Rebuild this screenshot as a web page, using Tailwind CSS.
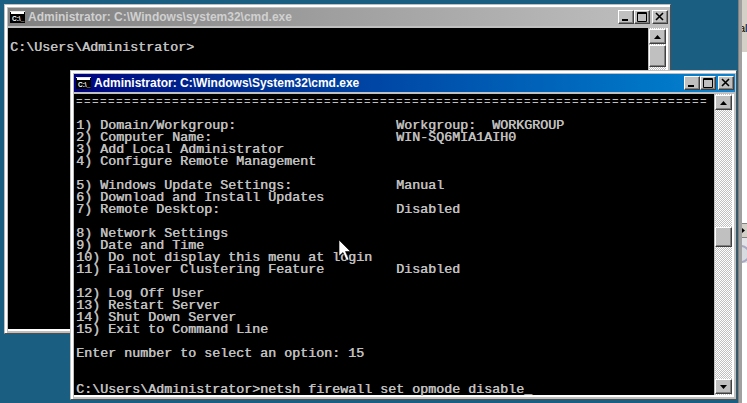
<!DOCTYPE html>
<html>
<head>
<meta charset="utf-8">
<script src="https://cdn.jsdelivr.net/npm/@tailwindcss/browser@4"></script>
</head>
<body class="m-0">
<div class="relative w-[747px] h-[403px] overflow-hidden bg-[#1a5e82]">

  <!-- window behind, at right edge -->
  <div class="absolute left-[738px] top-0 w-[9px] h-[403px] flex border-l-[1px] border-[#808080] bg-[#c0c0c0]">
    <div class="w-[3px] bg-[#a0a0a0]"></div>
    <div class="flex-1 flex flex-col bg-white overflow-hidden">
      <div class="h-[52px] bg-[#d4d0c8] pt-[22px] pl-[1px] font-['Liberation_Sans',sans-serif] text-[11px] leading-[13px] text-black whitespace-nowrap"><span class="-ml-[4px]">al</span></div>
      <div class="h-[171px]"></div>
      <div class="h-[15px] bg-[#d4d0c8] border-t border-b border-[#808080] flex items-center">
        <svg class="w-[3px] h-[5px]" viewBox="0 0 3 5"><path d="M0 0l3 2.500L0 5z" fill="#000"/></svg>
      </div>
      <div class="h-[25px] bg-[#e4e4e8] pt-[7px]">
        <div class="w-[18px] h-[18px] -ml-[10px] rounded-full border-2 border-[#a8a8c0] bg-[#d8dce0]"></div>
      </div>
    </div>
  </div>

  <!-- back window -->
  <div class="absolute left-[4px] top-[4px] w-[667px] h-[330px] bg-[#c0c0c0] border border-[#c0c0c0] border-r-[#505050] border-b-[#505050]">
    <div class="h-full flex flex-col border-l-2 border-t-2 border-white pl-[1px] pt-[1px]">
      <div class="h-[18px] w-[661px] shrink-0 flex items-center bg-linear-to-r from-[#808080] to-[#c0c0c0] pl-[2px] pr-[1px]">
        <svg class="w-[16px] h-[13px] shrink-0" viewBox="0 0 16 13"><rect width="15" height="12" fill="#000"/><rect x="1" y="1" width="13" height="2" fill="#fff"/><rect x="0" y="0" width="15" height="1" fill="#e8e8e8"/><text x="2" y="10" font-size="6.5" font-weight="700" font-family="Liberation Sans, sans-serif" fill="#fff">C:\_</text></svg>
        <span class="ml-[2px] font-['Liberation_Sans',sans-serif] font-bold text-[12px] leading-[14px] text-[#d0d0d0] whitespace-nowrap">Administrator: C:\Windows\system32\cmd.exe</span>
        <div class="ml-auto flex">
          <div class="w-[16px] h-[14px] bg-[#c0c0c0] border border-white border-r-[#404040] border-b-[#404040] shadow-[inset_-1px_-1px_#808080]"><svg class="w-[14px] h-[12px]" viewBox="0 0 14 12"><rect x="3" y="8" width="6" height="2" fill="#000"/></svg></div>
          <div class="w-[16px] h-[14px] bg-[#c0c0c0] border border-white border-r-[#404040] border-b-[#404040] shadow-[inset_-1px_-1px_#808080]"><svg class="w-[14px] h-[12px]" viewBox="0 0 14 12"><path d="M2.500 1.500h9v9h-9zM2 2.500h10" fill="none" stroke="#000"/></svg></div>
          <div class="ml-[2px] w-[16px] h-[14px] bg-[#c0c0c0] border border-white border-r-[#404040] border-b-[#404040] shadow-[inset_-1px_-1px_#808080]"><svg class="w-[14px] h-[12px]" viewBox="0 0 14 12"><path d="M3 2l7 7M10 2l-7 7" fill="none" stroke="#000" stroke-width="1.6"/></svg></div>
        </div>
      </div>
      <div class="h-[2px] shrink-0"></div>
      <div class="flex w-[660px] h-[303px] shrink-0 border-r-2 border-b-2 border-white">
        <pre class="w-[640px] h-[301px] bg-black m-0 pl-[2px] pt-[2px] font-['Liberation_Mono',monospace] text-[13.333px] leading-[12px] text-[#c0c0c0] [text-shadow:0.6px_0_#c0c0c0]">

C:\Users\Administrator&gt;</pre>
        <div class="w-[17px] ml-[1px] pt-[1px] flex flex-col bg-[repeating-conic-gradient(#fff_0_25%,#c0c0c0_0_50%)] bg-size-[2px_2px]">
          <div class="h-[15px] bg-[#c0c0c0] border border-white border-r-[#404040] border-b-[#404040] shadow-[inset_-1px_-1px_#808080] flex items-center justify-center"><svg class="w-[7px] h-[4px]" viewBox="0 0 7 4"><path d="M3.500 0L7 4H0z" fill="#000"/></svg></div>
          <div class="h-[22px] mt-[1px] bg-[#c0c0c0] border border-white border-r-[#404040] border-b-[#404040] shadow-[inset_-1px_-1px_#808080]"></div>
        </div>
      </div>
    </div>
  </div>

  <!-- front window -->
  <div class="absolute left-[70px] top-[70px] w-[667px] h-[330px] bg-[#c0c0c0] border border-[#c0c0c0] border-r-[#505050] border-b-[#505050]">
    <div class="h-full flex flex-col border-l-2 border-t-2 border-white pl-[1px] pt-[1px]">
      <div class="h-[18px] w-[661px] shrink-0 flex items-center bg-linear-to-r from-[#000080] to-[#1084d0] pl-[2px] pr-[1px]">
        <svg class="w-[16px] h-[13px] shrink-0" viewBox="0 0 16 13"><rect width="15" height="12" fill="#000"/><rect x="1" y="1" width="13" height="2" fill="#fff"/><rect x="0" y="0" width="15" height="1" fill="#e8e8e8"/><text x="2" y="10" font-size="6.5" font-weight="700" font-family="Liberation Sans, sans-serif" fill="#fff">C:\_</text></svg>
        <span class="ml-[2px] font-['Liberation_Sans',sans-serif] font-bold text-[12px] leading-[14px] text-white whitespace-nowrap">Administrator: C:\Windows\System32\cmd.exe</span>
        <div class="ml-auto flex">
          <div class="w-[16px] h-[14px] bg-[#c0c0c0] border border-white border-r-[#404040] border-b-[#404040] shadow-[inset_-1px_-1px_#808080]"><svg class="w-[14px] h-[12px]" viewBox="0 0 14 12"><rect x="3" y="8" width="6" height="2" fill="#000"/></svg></div>
          <div class="w-[16px] h-[14px] bg-[#c0c0c0] border border-white border-r-[#404040] border-b-[#404040] shadow-[inset_-1px_-1px_#808080]"><svg class="w-[14px] h-[12px]" viewBox="0 0 14 12"><path d="M2.500 1.500h9v9h-9zM2 2.500h10" fill="none" stroke="#000"/></svg></div>
          <div class="ml-[2px] w-[16px] h-[14px] bg-[#c0c0c0] border border-white border-r-[#404040] border-b-[#404040] shadow-[inset_-1px_-1px_#808080]"><svg class="w-[14px] h-[12px]" viewBox="0 0 14 12"><path d="M3 2l7 7M10 2l-7 7" fill="none" stroke="#000" stroke-width="1.6"/></svg></div>
        </div>
      </div>
      <div class="h-[2px] shrink-0"></div>
      <div class="flex w-[660px] h-[303px] shrink-0 border-r-2 border-b-2 border-white">
        <pre class="w-[640px] h-[301px] bg-black m-0 pl-[2px] pt-[2px] font-['Liberation_Mono',monospace] text-[13.333px] leading-[12px] text-[#c0c0c0] [text-shadow:0.6px_0_#c0c0c0]"><span class="text-[11px] tracking-[1.4px] [text-shadow:none]">===============================================================================</span>

1) Domain/Workgroup:                    Workgroup:  WORKGROUP
2) Computer Name:                       WIN-SQ6MIA1AIH0
3) Add Local Administrator
4) Configure Remote Management

5) Windows Update Settings:             Manual
6) Download and Install Updates
7) Remote Desktop:                      Disabled

8) Network Settings
9) Date and Time
10) Do not display this menu at login
11) Failover Clustering Feature         Disabled

12) Log Off User
13) Restart Server
14) Shut Down Server
15) Exit to Command Line

Enter number to select an option: 15


C:\Users\Administrator&gt;netsh firewall set opmode disable_</pre>
        <div class="w-[17px] ml-[1px] pt-[1px] pb-[1px] h-[301px] flex flex-col bg-[repeating-conic-gradient(#fff_0_25%,#c0c0c0_0_50%)] bg-size-[2px_2px]">
          <div class="h-[15px] bg-[#c0c0c0] border border-white border-r-[#404040] border-b-[#404040] shadow-[inset_-1px_-1px_#808080] flex items-center justify-center"><svg class="w-[7px] h-[4px]" viewBox="0 0 7 4"><path d="M3.500 0L7 4H0z" fill="#000"/></svg></div>
          <div class="h-[20px] mt-[117px] bg-[#c0c0c0] border border-white border-r-[#404040] border-b-[#404040] shadow-[inset_-1px_-1px_#808080]"></div>
          <div class="h-[15px] mt-auto bg-[#c0c0c0] border border-white border-r-[#404040] border-b-[#404040] shadow-[inset_-1px_-1px_#808080] flex items-center justify-center"><svg class="w-[7px] h-[4px]" viewBox="0 0 7 4"><path d="M0 0h7L3.500 4z" fill="#000"/></svg></div>
        </div>
      </div>
    </div>
  </div>

  <!-- mouse pointer -->
  <svg class="absolute left-[338px] top-[239px] w-[12px] h-[24px]" viewBox="0 0 12 24"><path d="M1 1v16l4-3.500 3.500 8 2.500-1-3.500-8h5z" fill="#fff" stroke="#000" stroke-width="0.6"/></svg>
</div>
</body>
</html>
